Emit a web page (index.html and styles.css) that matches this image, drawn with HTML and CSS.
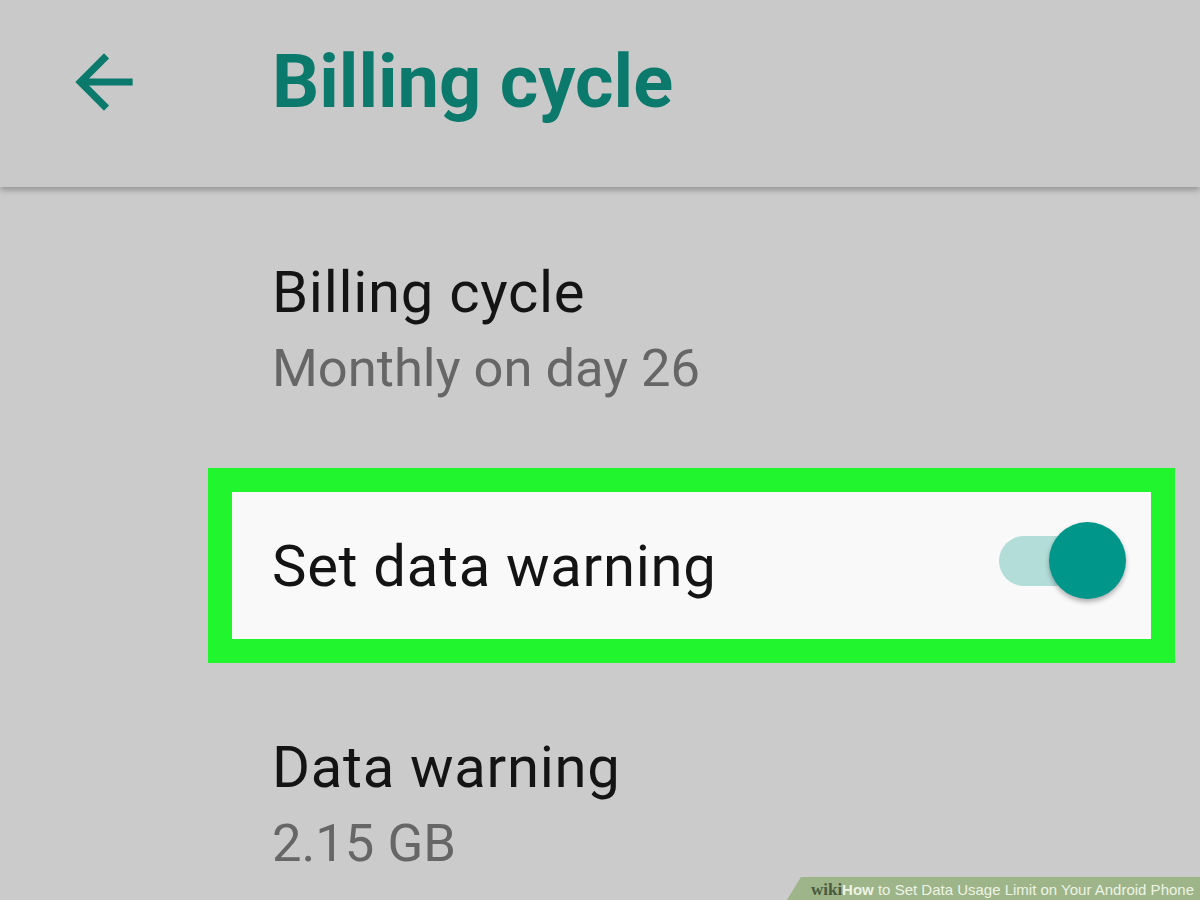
FILE: index.html
```html
<!DOCTYPE html>
<html>
<head>
<meta charset="utf-8">
<link rel="stylesheet" href="styles.css">
</head>
<body>
<header class="toolbar">
  <svg class="back" width="86" height="86" viewBox="0 0 24 24">
    <path d="M20 11H7.83l5.59-5.59L12 4l-8 8 8 8 1.41-1.41L7.83 13H20v-2z" fill="#0b7a6c"/>
  </svg>
  <h1 class="title">Billing cycle</h1>
</header>
<main class="content">
  <div class="item first">
    <div class="item-title">Billing cycle</div>
    <div class="item-sub">Monthly on day 26</div>
  </div>
  <div class="highlight">
    <div class="switch-row">
      <div class="item-title">Set data warning</div>
      <div class="switch"><span class="track"></span><span class="thumb"></span></div>
    </div>
  </div>
  <div class="item last">
    <div class="item-title">Data warning</div>
    <div class="item-sub">2.15 GB</div>
  </div>
</main>
<div class="watermark"><span class="wiki">wiki</span><span class="how">How</span> to Set Data Usage Limit on Your Android Phone</div>
</body>
</html>
```
FILE: styles.css
```css
html, body {
  margin: 0;
  padding: 0;
}
body {
  width: 1200px;
  height: 900px;
  overflow: hidden;
  background: #cbcbcb;
  font-family: Roboto, "Noto Sans", sans-serif;
  position: relative;
}
.toolbar {
  height: 187px;
  background: #c9c9c9;
  box-shadow: 0 3px 6px rgba(0,0,0,0.28);
  display: flex;
  align-items: flex-start;
  position: relative;
  z-index: 1;
}
.back {
  margin: 39px 0 0 61px;
  flex: none;
}
.title {
  margin: 38px 0 0 125px;
  font-size: 74px;
  font-weight: 700;
  line-height: 1.2;
  color: #0b7a6c;
}
.content {
  padding: 0 25px 0 208px;
  display: flex;
  flex-direction: column;
}
.item {
  padding-left: 64px;
}
.item.first {
  padding-top: 68px;
  padding-bottom: 61px;
}
.item.last {
  padding-top: 67px;
}
.item-title {
  font-size: 58px;
  line-height: 74px;
  letter-spacing: 0.7px;
  color: #141414;
}
.item-sub {
  font-size: 52.5px;
  line-height: 78px;
  color: #666666;
}
.highlight {
  border: 24px solid #20f52e;
  background: #f9f9f9;
  height: 147px;
  padding: 0 25px 0 40px;
  display: flex;
  align-items: center;
}
.switch-row {
  flex: 1;
  display: flex;
  align-items: center;
  justify-content: space-between;
}
.switch {
  position: relative;
  width: 127px;
  height: 77px;
  margin-bottom: 10px;
}
.track {
  position: absolute;
  left: 0;
  top: 14px;
  width: 100px;
  height: 50px;
  border-radius: 25px;
  background: #b2ddd9;
}
.thumb {
  position: absolute;
  left: 50px;
  top: 0;
  width: 77px;
  height: 77px;
  border-radius: 50%;
  background: #00968a;
  box-shadow: 0 3px 5px rgba(0,0,0,0.3);
}
.watermark {
  position: absolute;
  right: 0;
  bottom: 0;
  height: 23px;
  padding: 0 6px 0 24px;
  background: #9db588;
  clip-path: polygon(14px 0, 100% 0, 100% 100%, 0 100%);
  color: #eef3e6;
  font-family: "Liberation Sans", Arial, sans-serif;
  font-size: 15px;
  line-height: 25px;
  white-space: nowrap;
}
.wiki {
  font-family: "Liberation Serif", serif;
  font-weight: 700;
  color: #4a5a40;
  font-size: 17px;
}
.how {
  font-weight: 700;
}
```
